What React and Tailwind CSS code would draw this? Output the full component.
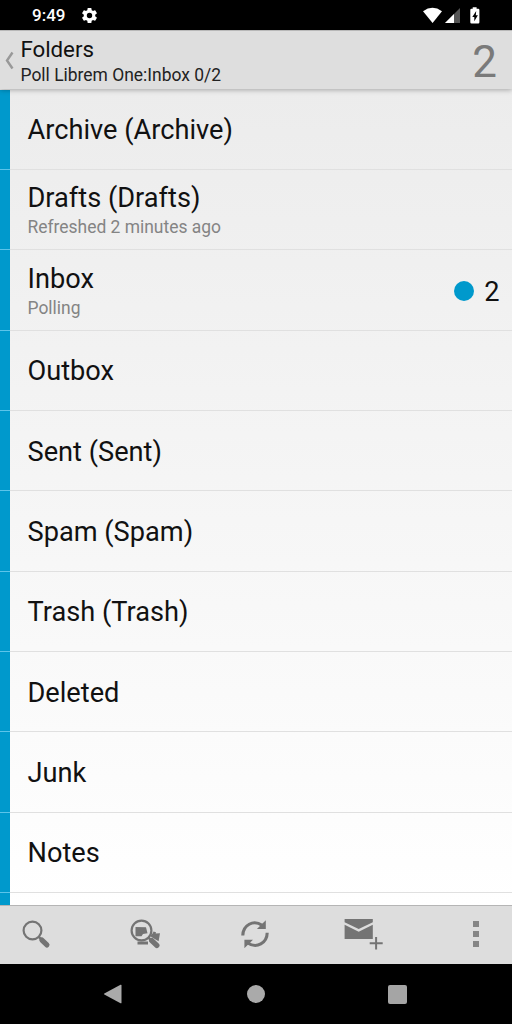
import React from "react";

const folders = [
  { name: "Archive (Archive)" },
  { name: "Drafts (Drafts)", status: "Refreshed 2 minutes ago" },
  { name: "Inbox", status: "Polling", unread: 2 },
  { name: "Outbox" },
  { name: "Sent (Sent)" },
  { name: "Spam (Spam)" },
  { name: "Trash (Trash)" },
  { name: "Deleted" },
  { name: "Junk" },
  { name: "Notes" },
];

const StatusBar = () => (
  <div className="flex h-[30px] shrink-0 items-center bg-black pl-8 text-white">
    <span className="w-[35px] whitespace-nowrap pt-px text-[17px] leading-[29px] font-medium">
      9:49
    </span>
    <svg className="ml-[13px] size-[19px]" viewBox="0 0 24 24" fill="#fff">
      <path
        fillRule="evenodd"
        d="M19.14 12.94c.04-.3.06-.61.06-.94s-.02-.64-.07-.94l2.03-1.58a.5.5 0 0 0 .12-.61l-1.92-3.32a.5.5 0 0 0-.59-.22l-2.39.96c-.5-.38-1.03-.7-1.62-.94L14.4 2.81a.48.48 0 0 0-.48-.41h-3.84a.48.48 0 0 0-.47.41l-.36 2.54c-.59.24-1.13.57-1.62.94l-2.39-.96a.49.49 0 0 0-.59.22L2.74 8.87c-.12.21-.08.47.12.61l2.03 1.58c-.05.3-.09.63-.09.94s.02.64.07.94l-2.03 1.58a.5.5 0 0 0-.12.61l1.92 3.32c.12.22.37.29.59.22l2.39-.96c.5.38 1.03.7 1.62.94l.36 2.54c.05.24.24.41.48.41h3.84c.24 0 .44-.17.47-.41l.36-2.54c.59-.24 1.13-.56 1.62-.94l2.39.96c.22.08.47 0 .59-.22l1.92-3.32a.5.5 0 0 0-.12-.61zM12 15.4a3.4 3.4 0 1 1 0-6.8 3.4 3.4 0 0 1 0 6.8z"
      />
    </svg>
    <svg className="mr-[31px] ml-auto h-[17px] w-[58px]" viewBox="0 0 58 17" fill="#fff">
      <path d="M0 4.2Q9.5-2.6 19 4.2L9.6 16z" />
      <path d="M37 1v15H22z" fill="#555" />
      <path d="M31 7v9h-9z" />
      <path
        fillRule="evenodd"
        d="M48.5 1.8h1.2V.2h3.9v1.6h1.6q1.2 0 1.2 1.2v12.2q0 1.2-1.2 1.2h-6.7q-1.2 0-1.2-1.2V3q0-1.2 1.2-1.2zM53.2 4l-3.9 6h2v4.2l3.6-6h-2.1z"
      />
    </svg>
  </div>
);

const Header = () => (
  <div className="relative z-10 flex h-[59px] shrink-0 items-center border-t border-[#b8b8b8] bg-[#dedede] pr-[15px] shadow-[0_1px_5px_rgba(0,0,0,0.3)]">
    <svg className="ml-[5px] h-[19px] w-[9px]" viewBox="0 0 9 18" fill="none">
      <path d="M7.5 1 2 9l5.5 8" stroke="#999" strokeWidth="2.4" />
    </svg>
    <div className="ml-[6.5px] flex flex-col pt-[5px]">
      <h1 className="text-[22.3px] leading-[26px] tracking-[-0.05px] text-[#111]">Folders</h1>
      <p className="text-[17.45px] leading-[27px] text-[#222]">
        Poll Librem One:Inbox 0/2
      </p>
    </div>
    <span className="ml-auto pt-[3px] text-[44px] leading-none font-normal text-[#7a7a7a]">2</span>
  </div>
);

const FolderRow = ({ name, status, unread }) => (
  <li className="flex h-[80.35px] shrink-0">
    <div className="w-[10px] border-b border-[#5cc4ea] bg-[#0099cc]" />
    <div className="flex flex-1 items-center border-b border-[#e0e0e0] pt-[2px] pr-[12.5px] pl-[17.5px]">
      <div className="flex flex-col">
        <span className="text-[27.2px] leading-[32px] text-[#111]">{name}</span>
        {status && (
          <span className="-mb-px pt-px text-[17.45px] leading-[25px] text-[#848484]">{status}</span>
        )}
      </div>
      {unread && (
        <div className="ml-auto flex items-center gap-[10px]">
          <span className="size-[20px] rounded-full bg-[#0099cc]" />
          <span className="pt-px text-[27.2px] leading-[32px] text-[#111]">{unread}</span>
        </div>
      )}
    </div>
  </li>
);

const Toolbar = () => (
  <div className="flex h-[59px] shrink-0 items-center border-t border-[#b5b5b5] bg-[#dddddd] text-[#747474]">
    {/* Search */}
    <svg className="ml-[22px] size-[30px]" viewBox="0 0 30 30" fill="none" stroke="currentColor">
      <circle cx="10.5" cy="10.5" r="8.9" strokeWidth="2.2" />
      <path d="m16.8 16.8 3 3" strokeWidth="2.4" />
      <path d="m19.9 20.1 5 4.8" strokeWidth="5.2" strokeLinecap="round" />
    </svg>
    {/* Search in folders */}
    <svg className="ml-[78px] size-[32px]" viewBox="0 0 32 32" fill="none" stroke="currentColor">
      <path d="M5.5 8l10.5.3 1.5 6-4.5.7-1.5 2.2H5.5zM7.5 22.5h10.5v3h-10.5zM23.5 12.6l2.5.6-.3 1.4 4.3-.3-1.4 8-5.6-3.2-3-2.2 2.8-2.6z" fill="currentColor" stroke="none" />
      <circle cx="11.5" cy="11.5" r="9.9" strokeWidth="2.2" />
      <path d="m18.3 18.3 3 3" strokeWidth="2.6" />
      <path d="m21.8 21.6 5 4.8" strokeWidth="5.4" strokeLinecap="round" />
    </svg>
    {/* Refresh */}
    <svg className="ml-[79px] size-[28px] -translate-y-px" viewBox="0 0 28 28" fill="none" stroke="currentColor" strokeWidth="3.1">
      <path d="M1.8 15.5C2 5.2 12.2-.8 21.2 5.4" />
      <path d="M26.2 12.8C26 23 15.8 29 6.8 23" />
      <path d="M24.8.2v8.9h-8.9zM3.4 28.2v-8.4h8.6z" fill="currentColor" stroke="none" />
    </svg>
    {/* Compose */}
    <svg className="ml-[75px] h-[32px] w-[39px] -translate-y-px" viewBox="0 0 39 32" fill="currentColor">
      <path d="M.6 1h28.2v3.2L14.7 11 .6 4.2zM.6 6.8l14.1 6.9 14.1-6.9v14.2H.6z" />
      <path d="M32.1 19v12.6M25.7 25.3h13" fill="none" stroke="currentColor" strokeWidth="2" />
    </svg>
    <div className="ml-[90px] flex -translate-y-px flex-col gap-[4px]">
      <span className="size-[6px] bg-[#858585]" />
      <span className="size-[6px] bg-[#858585]" />
      <span className="size-[6px] bg-[#858585]" />
    </div>
  </div>
);

const NavigationBar = () => (
  <div className="flex h-[60px] shrink-0 items-center bg-black">
    <svg className="ml-[103px] h-[20px] w-[19px]" viewBox="0 0 19 20" fill="#aaa">
      <path d="M17.5.8Q18.5.3 18.5 1.5v17q0 1.2-1 .7L1.3 10.5q-.8-.5 0-1z" />
    </svg>
    <span className="ml-[125px] size-[18px] rounded-full bg-[#aaa]" />
    <span className="ml-[123px] size-[19px] rounded-[2px] bg-[#a5a5a5]" />
  </div>
);

export default function App() {
  return (
    <div className="flex h-[1024px] w-[512px] flex-col overflow-hidden bg-white font-['Roboto',sans-serif]">
      <StatusBar />
      <Header />
      <ul className="flex min-h-0 flex-1 flex-col overflow-hidden bg-linear-to-b from-[#ececec] to-white pt-[0.7px]">
        {folders.map((folder) => (
          <FolderRow key={folder.name} {...folder} />
        ))}
        <li className="w-[10px] flex-1 bg-[#0099cc]" />
      </ul>
      <Toolbar />
      <NavigationBar />
    </div>
  );
}
